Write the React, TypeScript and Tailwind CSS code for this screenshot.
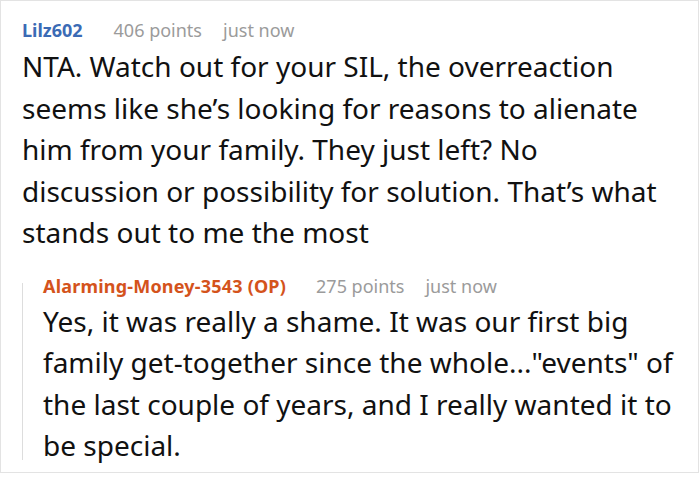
export default function App() {
  return (
    <div className="w-[700px] h-[478px] bg-white" style={{ fontFamily: '"Noto Sans", "Open Sans", sans-serif' }}>
      <div className="w-[699px] h-[473px] border border-[#e3e3e3] pl-[21px] pr-[18px] pt-[17px]">
        <div className="flex items-baseline text-[18px] leading-6">
          <span className="font-bold text-[#3b6bb5]">Lilz602</span>
          <span className="ml-[31px] text-[#9b9b9b]">406 points</span>
          <span className="ml-[21px] text-[#9b9b9b]">just now</span>
        </div>
        <p className="mt-[4px] text-[28px] leading-[41.5px] text-[#111]">
          NTA. Watch out for your SIL, the overreaction seems like she’s looking for reasons to alienate him from your family. They just left? No discussion or possibility for solution. That’s what stands out to me the most
        </p>
        <div className="mt-[20px] flex">
          <div className="mt-[9px] mb-[7px] w-px shrink-0 bg-[#dddddd]" />
          <div className="pl-[20px]">
            <div className="flex items-baseline text-[18px] leading-6">
              <span className="font-bold tracking-[0.2px] text-[#d4531c]">Alarming-Money-3543 (OP)</span>
              <span className="ml-[30px] text-[#9b9b9b]">275 points</span>
              <span className="ml-[21px] text-[#9b9b9b]">just now</span>
            </div>
            <p className="mt-[3px] text-[28px] leading-[41.5px] text-[#111]">
              Yes, it was really a shame. It was our first big family get-together since the whole..."events" of the last couple of years, and I really wanted it to be special.
            </p>
          </div>
        </div>
      </div>
    </div>
  );
}
